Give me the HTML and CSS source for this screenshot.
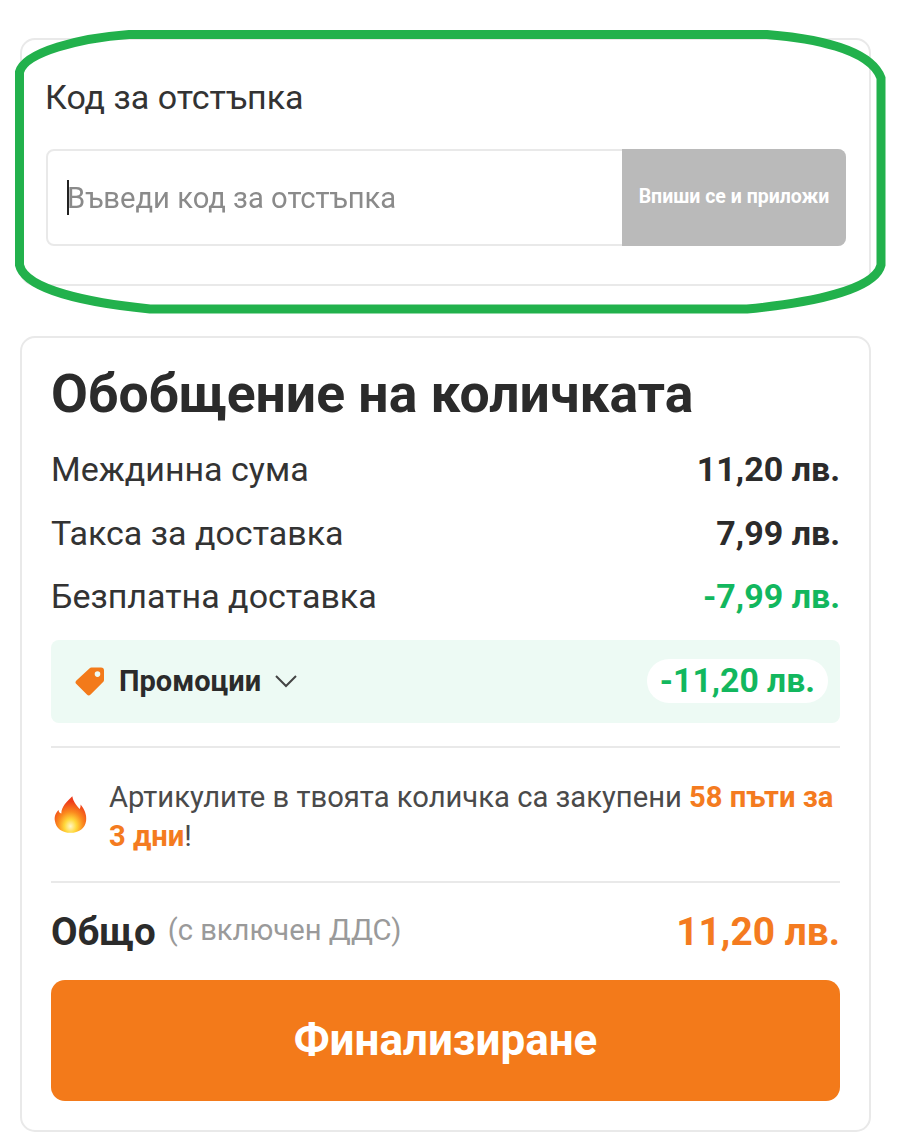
FILE: index.html
```html
<!DOCTYPE html>
<html lang="bg">
<head>
<meta charset="utf-8">
<title>Обобщение на количката</title>
<link rel="stylesheet" href="styles.css">
</head>
<body>
<main class="page">
  <section class="card coupon">
    <h2 class="coupon-label">Код за отстъпка</h2>
    <div class="coupon-field">
      <div class="coupon-input-wrap">
        <input class="coupon-input" type="text" placeholder="Въведи код за отстъпка">
        <span class="caret"></span>
      </div>
      <button class="coupon-btn" type="button">Впиши се и приложи</button>
    </div>
  </section>

  <section class="card summary">
    <h1 class="summary-title">Обобщение на количката</h1>
    <div class="rows">
      <div class="row"><span>Междинна сума</span><strong>11,20 лв.</strong></div>
      <div class="row"><span>Такса за доставка</span><strong>7,99 лв.</strong></div>
      <div class="row"><span>Безплатна доставка</span><strong class="green">-7,99 лв.</strong></div>
    </div>
    <div class="promo">
      <div class="promo-left">
        <svg class="tag" viewBox="0 0 32 32" aria-hidden="true"><path fill-rule="evenodd" fill="#f37a1a" d="M17.5 2.5h9.5a3 3 0 0 1 3 3v9.5a3 3 0 0 1-.9 2.1L16.6 29.6a2.6 2.6 0 0 1-3.700 0L2.400 19.100a2.600 2.600 0 0 1 0-3.700L15.400 3.400a3 3 0 0 1 2.100-.9zM23.500 6.300a2.800 2.800 0 1 0 0 5.600a2.800 2.800 0 0 0 0-5.600z"/></svg>
        <span class="promo-name">Промоции</span>
        <svg class="chev" viewBox="0 0 24 14" aria-hidden="true"><path d="M2 2l10 10L22 2" fill="none" stroke="#444" stroke-width="2"/></svg>
      </div>
      <span class="promo-pill">-11,20 лв.</span>
    </div>
    <div class="social">
      <svg class="flame" viewBox="0 0 36 42" aria-hidden="true">
        <defs>
          <radialGradient id="flameFill" cx="50%" cy="82%" r="68%">
            <stop offset="0" stop-color="#fff6c8"/>
            <stop offset=".28" stop-color="#ffd83a"/>
            <stop offset=".58" stop-color="#fb8a1e"/>
            <stop offset="1" stop-color="#ee3b1a"/>
          </radialGradient>
        </defs>
        <path fill="url(#flameFill)" d="M20 1c1 6 4 9 8 14 1-2 1-3 1-5 4 5 7 11 6 18-1 8-8 13-17 13S2 36 1 28c-1-5 1-9 4-12 0 2 1 3 3 4 0-8 6-13 12-19z"/>
      </svg>
      <p class="social-text">Артикулите в твоята количка са закупени <b class="orange">58 пъти за 3 дни</b>!</p>
    </div>
    <div class="total">
      <div class="total-left"><strong class="total-label">Общо</strong><span class="total-note">(с включен ДДС)</span></div>
      <strong class="total-sum">11,20 лв.</strong>
    </div>
    <button class="checkout" type="button">Финализиране</button>
  </section>
</main>
<svg class="annotation" viewBox="0 0 900 330" aria-hidden="true">
  <path d="M129 34.500L767 34.500C810 38 870 48 881 78L881 265C875 290 810 303 747 309L150 309C90 303 25 290 19.500 265L19.500 72C25 52 80 38 129 34.500Z" fill="none" stroke="#22b14c" stroke-width="9"/>
</svg>
</body>
</html>
```
FILE: styles.css
```css
* { box-sizing: border-box; }
html, body { margin: 0; background: #fff; }
body {
  position: relative;
  height: 1147px;
  overflow: hidden;
  font-family: Roboto, "Liberation Sans", sans-serif;
  color: #2b2b2b;
}
.page {
  width: 851px;
  margin-left: 20px;
  padding-top: 38px;
  display: flex;
  flex-direction: column;
  gap: 50px;
  filter: blur(0.4px);
}
.card {
  border: 2px solid #e9e9e9;
  border-radius: 15px;
  background: #fff;
}
.coupon {
  height: 248px;
  padding: 37px 23px 0 24px;
}
.coupon-label {
  margin: 0 0 32px -1px;
  font-size: 34px;
  line-height: 40px;
  font-weight: 400;
  color: #333;
}
.coupon-field {
  display: flex;
  height: 97px;
  border: 2px solid #e9e9e9;
  border-radius: 8px;
  position: relative;
}
.coupon-input-wrap {
  position: relative;
  flex: 1;
  display: flex;
}
.coupon-input {
  flex: 1;
  min-width: 0;
  border: 0;
  outline: 0;
  background: transparent;
  padding: 0 19px;
  font: 400 29.200px Roboto, sans-serif;
  color: #333;
}
.coupon-input::placeholder { color: #8a8a8a; opacity: 1; }
.caret {
  position: absolute;
  left: 19px;
  top: 29px;
  width: 2px;
  height: 35px;
  background: #222;
}
.coupon-btn {
  width: 224px;
  margin: -2px -2px -2px 0;
  border: 0;
  border-radius: 0 8px 8px 0;
  background: #bababa;
  color: #fff;
  font: 700 19.500px Roboto, sans-serif;
  padding: 0 0 2px;
}
.summary {
  height: 796px;
  padding: 31px 29px 0;
  display: flex;
  flex-direction: column;
}
.summary-title {
  margin: 0;
  font-size: 53.500px;
  line-height: 50px;
  font-weight: 700;
  color: #2b2b2b;
}
.rows {
  margin-top: 30px;
  display: flex;
  flex-direction: column;
  gap: 23.500px;
}
.row {
  display: flex;
  justify-content: space-between;
  align-items: center;
  height: 40px;
  font-size: 34px;
  color: #333;
}
.row strong { font-weight: 700; color: #2b2b2b; }
.row strong.green, .green { color: #12b75e; }
.promo {
  margin-top: 24px;
  height: 83px;
  border-radius: 8px;
  background: #edfaf4;
  display: flex;
  align-items: center;
  justify-content: space-between;
  padding: 0 12px 2px 23px;
}
.promo-left { display: flex; align-items: center; }
.tag { width: 32px; height: 32px; }
.promo-name {
  margin-left: 13px;
  font-size: 29px;
  font-weight: 700;
  color: #2b2b2b;
}
.chev { width: 24px; height: 14px; margin-left: 13px; }
.promo-pill {
  height: 44px;
  padding: 0 13px;
  border-radius: 22px;
  background: #fff;
  color: #12b75e;
  font-size: 33.700px;
  line-height: 44px;
  font-weight: 700;
}
.social {
  margin-top: 23px;
  border-top: 2px solid #e9e9e9;
  border-bottom: 2px solid #e9e9e9;
  height: 137px;
  display: flex;
  align-items: center;
}
.flame { width: 33px; height: 39px; margin-left: 3px; flex: none; }
.social-text {
  margin: 0 0 0 22px;
  padding-top: 5px;
  font-size: 29.200px;
  line-height: 39px;
  color: #4a4a4a;
}
.orange { color: #f47b20; font-weight: 700; }
.total {
  height: 97px;
  display: flex;
  align-items: center;
  justify-content: space-between;
}
.total-left { display: flex; align-items: baseline; gap: 12px; }
.total-label { font-size: 38.500px; font-weight: 700; }
.total-note { font-size: 29.200px; color: #9a9a9a; position: relative; bottom: 5px; }
.total-sum { font-size: 38.900px; font-weight: 700; color: #f47b20; }
.checkout {
  height: 121px;
  border: 0;
  border-radius: 14px;
  background: #f37a1a;
  color: #fff;
  font: 700 44px Roboto, sans-serif;
  padding: 0 0 2px;
}
.annotation {
  position: absolute;
  left: 0;
  top: 0;
  width: 900px;
  height: 330px;
  pointer-events: none;
}
```
